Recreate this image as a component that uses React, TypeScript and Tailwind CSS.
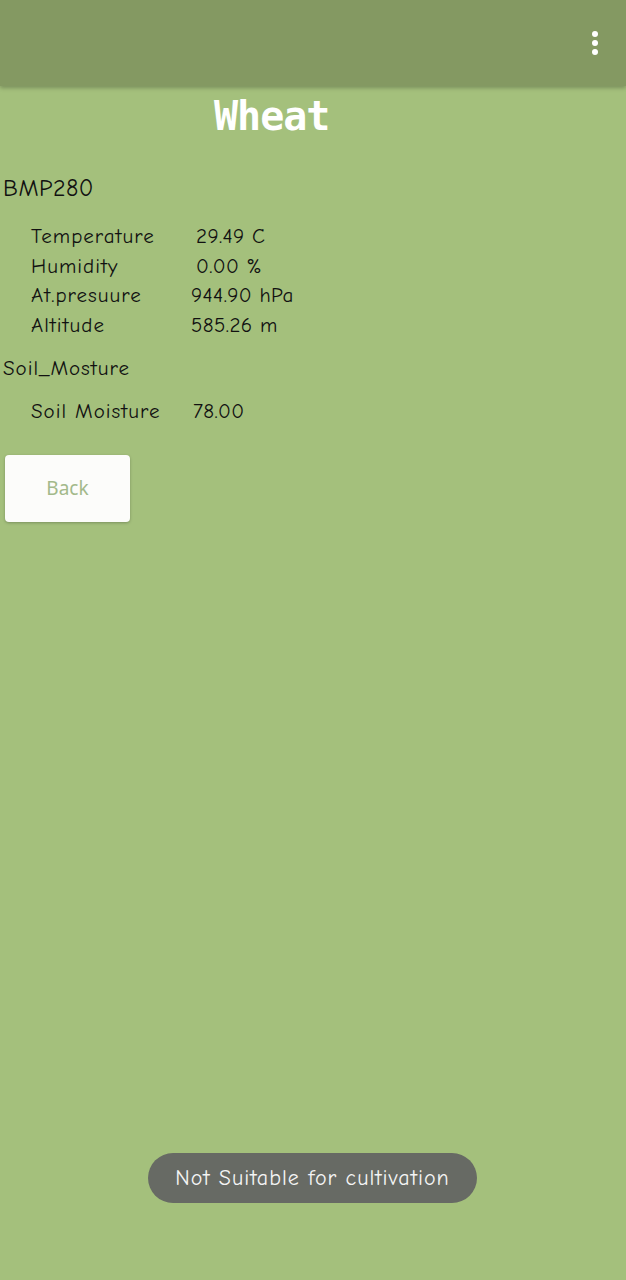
import React from "react";

const hand = { fontFamily: '"Comic Neue", "Lato", "Open Sans", sans-serif' };

function Row({ label, value, vx }: { label: string; value: string; vx: string }) {
  return (
    <div className="flex h-[29.5px] items-center whitespace-nowrap text-[21px] leading-none text-[#111]">
      <span className="w-[160px] shrink-0 pl-[31px] tracking-[1px]">{label}</span>
      <span className={`${vx} tracking-[0.4px]`}>{value}</span>
    </div>
  );
}

export default function App() {
  return (
    <div className="relative flex min-h-[1280px] w-[626px] flex-col bg-[#a4c07c]" style={hand}>
      <div className="relative z-10 flex h-[86px] items-center justify-end bg-[#849962] pr-[26px] shadow-[0_2px_4px_rgba(0,0,0,0.25)]">
        <svg width="10" height="26" viewBox="0 0 10 26">
          <circle cx="5" cy="4" r="3" fill="#fff" />
          <circle cx="5" cy="13" r="3" fill="#fff" />
          <circle cx="5" cy="22" r="3" fill="#fff" />
        </svg>
      </div>
      <div className="flex h-[60px] items-center pl-[214px]">
        <span
          className="text-[40px] font-bold leading-none text-white"
          style={{ fontFamily: '"DejaVu Sans Mono", monospace', letterSpacing: "-1px" }}
        >
          Wheat
        </span>
      </div>
      <div className="mt-[30px] pl-[3px] text-[24px] leading-none tracking-[0.5px] text-[#111]">BMP280</div>
      <div className="mt-[22px] flex flex-col">
        <Row label="Temperature" value="29.49 C" vx="pl-[36px]" />
        <Row label="Humidity" value="0.00 %" vx="pl-[36px]" />
        <Row label="At.presuure" value="944.90 hPa" vx="pl-[31px]" />
        <Row label="Altitude" value="585.26 m" vx="pl-[31px]" />
      </div>
      <div className="mt-[18px] pl-[3px] text-[21px] leading-none tracking-[1px] text-[#111]">Soil_Mosture</div>
      <div className="mt-[18px]">
        <Row label="Soil Moisture" value="78.00" vx="pl-[33px]" />
      </div>
      <div className="mt-[28px] pl-[5px]">
        <div
          className="flex h-[67px] w-[125px] items-center justify-center rounded-[4px] bg-[#fcfcfa] text-[19px] text-[#a3b98a] shadow-[0_1px_3px_rgba(0,0,0,0.25)]"
          style={{ fontFamily: '"Noto Sans", sans-serif' }}
        >
          Back
        </div>
      </div>
      <div className="absolute left-[148px] top-[1153px] flex h-[50px] w-[329px] items-center justify-center rounded-full bg-[#676a64] text-[22px] tracking-[1px] text-[#f4f4f4]">
        Not Suitable for cultivation
      </div>
    </div>
  );
}
